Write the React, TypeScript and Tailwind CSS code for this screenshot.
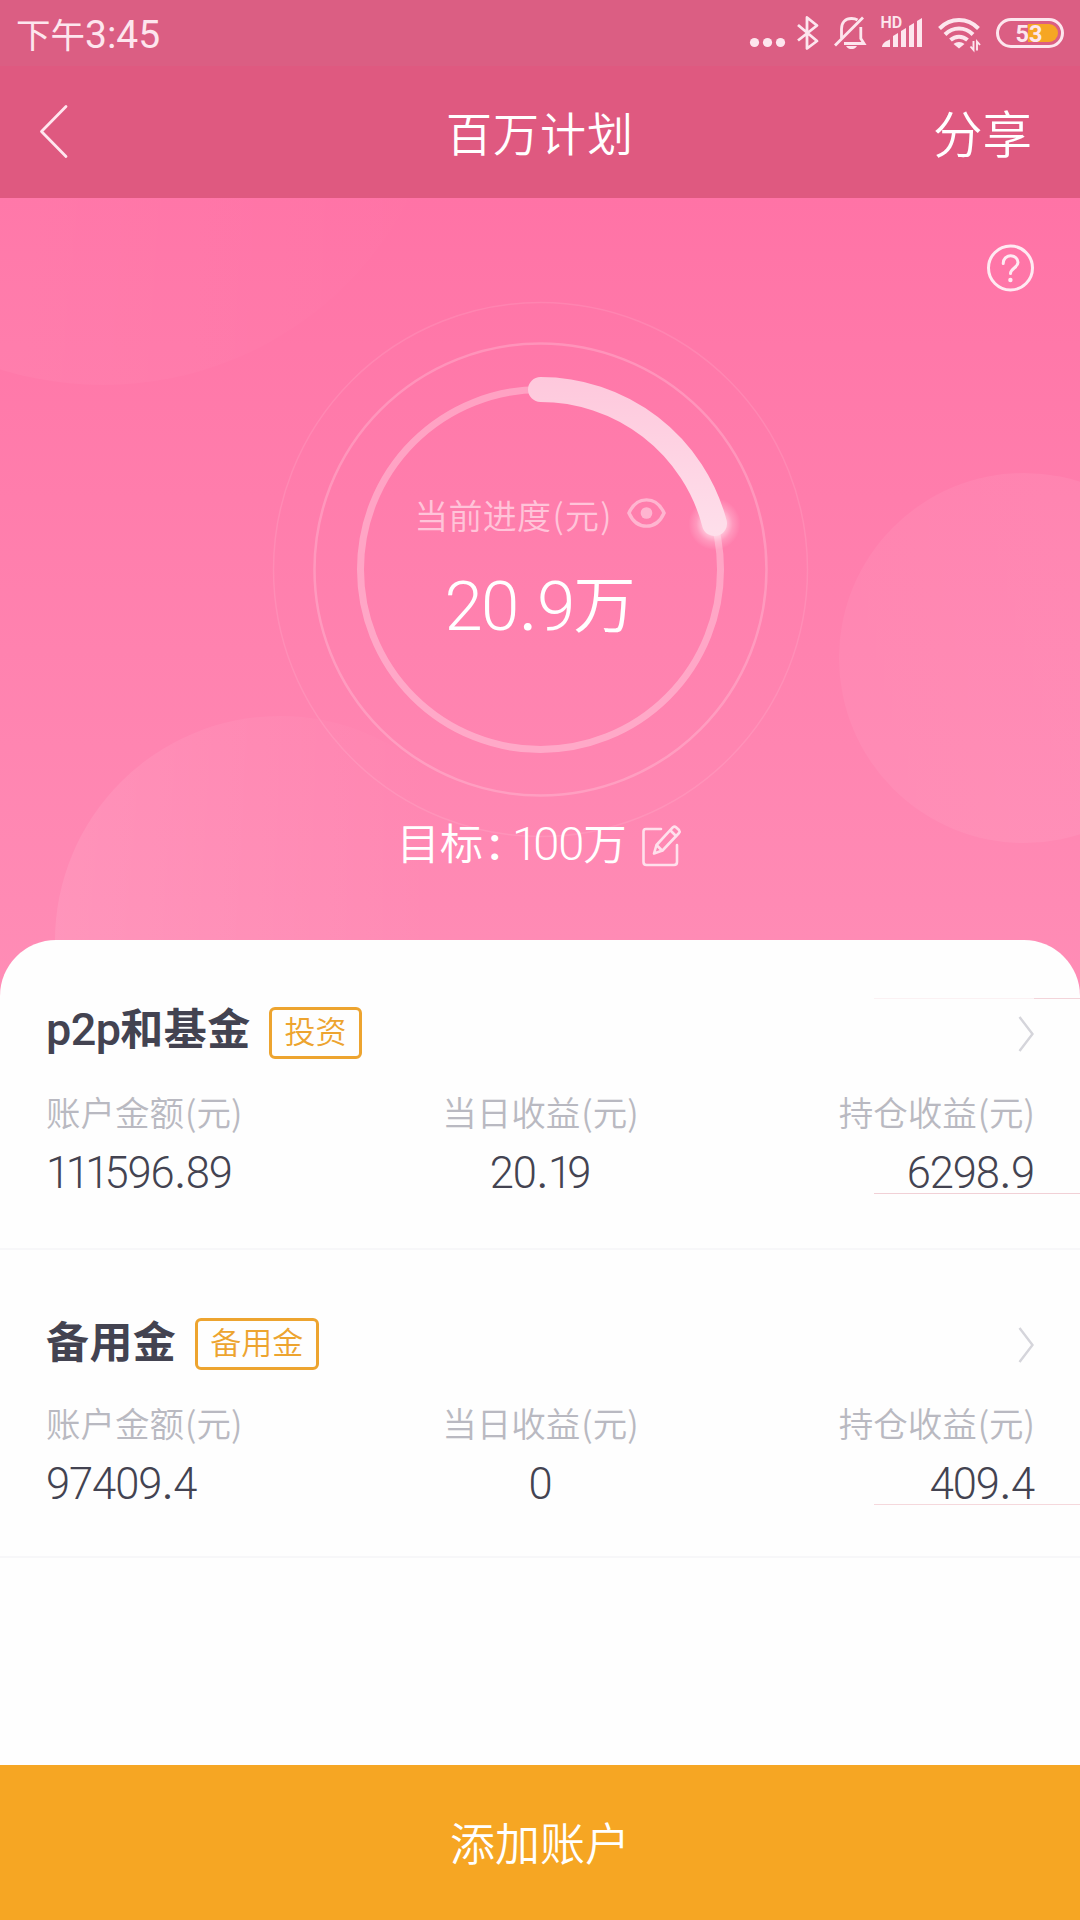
import React from "react";

const FONT = "font-['Noto_Sans_CJK_SC',sans-serif]";

function Digits({ value }: { value: string }) {
  return (
    <span className="font-['Roboto',sans-serif] tracking-[-0.025em]">
      {value.split("").map((c, i) =>
        c === "1" ? (
          <span key={i} className={i === 0 ? "-mr-[0.075em]" : "-mr-[0.085em]"}>
            {c}
          </span>
        ) : c === "." ? (
          <span key={i} className="mx-[0.02em] font-normal">
            {c}
          </span>
        ) : (
          <span key={i}>{c}</span>
        ),
      )}
    </span>
  );
}

function StatusIcons() {
  return (
    <div className="flex items-start text-[#fde6ee]">
      <svg className="ml-[4px] h-[66px] w-[40px]" viewBox="748 0 40 66" fill="currentColor">
        <circle cx="754.5" cy="42.5" r="4.6" />
        <circle cx="767.5" cy="42.5" r="4.6" />
        <circle cx="780.5" cy="42.5" r="4.6" />
      </svg>
      <svg className="ml-[4px] h-[66px] w-[36px]" viewBox="792 0 36 66" fill="none" stroke="currentColor" strokeWidth="2.8" strokeLinejoin="round">
        <path d="M798 25L817 41L807 48.5V17.5L817 25.5L798 40.500" />
      </svg>
      <svg className="ml-[4px] h-[66px] w-[38px]" viewBox="832 0 38 66" fill="none" stroke="currentColor" strokeWidth="2.8">
        <path d="M841.5 38V29C841.500 22 845.500 18.500 851.500 18.500C854 18.500 856 19 857.500 20" />
        <path d="M844 43.500H864L860.800 38.500V27" />
        <path d="M835 45.500L863 17.500" />
        <path d="M846 46H857C855.500 48.500 853.500 49 851.500 49S847.500 48.500 846 46Z" fill="currentColor" stroke="none" />
      </svg>
      <svg className="ml-[10px] h-[66px] w-[44px]" viewBox="880 0 44 66" fill="currentColor">
        <text x="880.5" y="28" fontFamily="Roboto" fontWeight="600" fontSize="16">HD</text>
        <path d="M882 47C882 44 885 41 890 39.500V47Z" />
        <path d="M893 36L898 33V47H893Z" />
        <path d="M901 31L906 28V47H901Z" />
        <path d="M909 26L914 23V47H909Z" />
        <path d="M917 21L922 18V47H917Z" />
      </svg>
      <svg className="ml-[14px] h-[66px] w-[44px]" viewBox="938 0 44 66" fill="none" stroke="currentColor" strokeWidth="4">
        <path d="M939.500 28.500C950.500 17.200 967.500 17.200 978.500 28.500" />
        <path d="M945 34.500C953 26.500 965 26.500 973 34.500" />
        <path d="M950.500 40C955.500 35.500 962.500 35.500 967.500 40" />
        <path d="M953.500 44C956.500 41.200 961.500 41.200 964.500 44L959 48.500Z" fill="currentColor" stroke="none" />
        <path d="M973.500 41V50L970.500 46.500M977 50.500V41.500L980 45" strokeWidth="1.900" />
      </svg>
      <svg className="ml-[13px] h-[66px] w-[85px]" viewBox="995 0 85 66" fill="none">
        <rect x="997.500" y="19.500" width="65" height="27" rx="13.500" stroke="currentColor" strokeWidth="3" />
        <path d="M1028 24H1049A9 9 0 0 1 1049 42H1028Z" fill="#f6a623" />
        <text x="1029" y="41.500" textAnchor="middle" fill="currentColor" fontFamily="Roboto" fontWeight="700" fontSize="23.5">53</text>
      </svg>
    </div>
  );
}

function Ring() {
  return (
    <svg className="absolute left-0 top-0 h-[796px] w-[1080px]" viewBox="0 198 1080 796" fill="none">
      <defs>
        <linearGradient id="c1" x1="0" y1="0" x2="1" y2="0">
          <stop offset="0" stopColor="#fff" stopOpacity="0.06" />
          <stop offset="1" stopColor="#fff" stopOpacity="0" />
        </linearGradient>
        <linearGradient id="c2" x1="0" y1="0" x2="1" y2="0">
          <stop offset="0" stopColor="#fff" stopOpacity="0.09" />
          <stop offset="0.85" stopColor="#fff" stopOpacity="0" />
        </linearGradient>
        <linearGradient id="c3" x1="0" y1="0" x2="1" y2="0">
          <stop offset="0" stopColor="#fff" stopOpacity="0.05" />
          <stop offset="1" stopColor="#fff" stopOpacity="0.07" />
        </linearGradient>
        <linearGradient id="arc" gradientUnits="userSpaceOnUse" x1="0" y1="377" x2="0" y2="536">
          <stop offset="0" stopColor="#fec8dc" />
          <stop offset="1" stopColor="#fedfeb" />
        </linearGradient>
        <radialGradient id="glow">
          <stop offset="0.4" stopColor="#fff" stopOpacity="0.6" />
          <stop offset="0.7" stopColor="#fff" stopOpacity="0.2" />
          <stop offset="1" stopColor="#fff" stopOpacity="0" />
        </radialGradient>
      </defs>
      <circle cx="103" cy="40" r="345" fill="url(#c1)" />
      <circle cx="1024" cy="658" r="185" fill="url(#c3)" />
      <circle cx="280" cy="941" r="225" fill="url(#c2)" />
      <circle cx="540.500" cy="569.500" r="267" stroke="#fff" strokeOpacity="0.1" strokeWidth="1.500" />
      <circle cx="540.500" cy="569.500" r="226" stroke="#fff" strokeOpacity="0.2" strokeWidth="2.500" />
      <circle cx="540.500" cy="569.500" r="180" stroke="#fff" strokeOpacity="0.3" strokeWidth="7" />
      <circle cx="714.500" cy="524" r="26" fill="url(#glow)" />
      <path d="M540.500 389.500A180 180 0 0 1 714.500 523.500" stroke="url(#arc)" strokeWidth="25" strokeLinecap="round" />
    </svg>
  );
}

function Hero() {
  return (
    <section className="relative h-[802px] bg-linear-to-b from-[#ff73a6] to-[#ff8db6]">
      <Ring />
      <div className="relative flex flex-col items-center">
        <div className="flex h-[140px] w-full justify-end pr-[46px] pt-[46px]">
          <svg className="h-[48px] w-[48px]" viewBox="0 0 48 48" fill="none" stroke="#ffeaf2" strokeWidth="3" strokeLinecap="round">
            <circle cx="24.500" cy="24" r="22" />
            <path d="M17.200 19.500C17.200 14.800 20.500 11.800 24.600 11.800C29 11.800 32 14.800 32 18.500C32 23.500 24.500 24.500 24.500 29.500" />
            <circle cx="24.400" cy="36" r="2.200" fill="#ffeaf2" stroke="none" />
          </svg>
        </div>
        <div className="mt-[149px] flex h-[56px] items-center">
          <span className="whitespace-nowrap text-[34px] font-[350] leading-[56px] tracking-[0.300px] text-[#ffc4d9]">
            当前进度<span className="mx-[1px]">(</span>元<span className="ml-[1px]">)</span>
          </span>
          <svg className="mb-[4px] ml-[15px] h-[32px] w-[39px]" viewBox="0 0 40 32" fill="none" stroke="#ffb5d0" strokeWidth="3.500">
            <path d="M2 16C6 7 12 2.500 20 2.500S34 7 38 16C34 25 28 29.500 20 29.500S6 25 2 16Z" />
            <circle cx="20" cy="16" r="6" fill="#ffb5d0" stroke="none" />
          </svg>
        </div>
        <div className="mt-[22px] flex h-[84px] items-baseline whitespace-nowrap text-[69px] font-light leading-[84px] text-white">
          <Digits value="20.9" />
          <span className="text-[62px] font-[350] leading-none"><span className="relative -top-[2px]">万</span></span>
        </div>
        <div className="mt-[163px] flex h-[60px] items-center">
          <span className="whitespace-nowrap text-[43.500px] font-[350] leading-[60px] text-white">
            目标<span className="mx-[5px] font-['Roboto'] text-[46px] font-semibold">:</span><span className="ml-[6px] text-[47px] font-light"><Digits value="100" /></span>万
          </span>
          <svg className="ml-[15px] mt-[6px] h-[44px] w-[42px]" viewBox="643 823 42 44" fill="none" stroke="#ffe0ec" strokeWidth="2.600" strokeLinecap="round" strokeLinejoin="round">
            <path d="M662 829H647Q644.500 829 644.500 831.500V862Q644.500 865 647.500 865H675Q678 865 678 862V845" />
            <path d="M655 853.500L657.500 845L674 827.200Q675.500 826 677 827.200L680 830Q681.200 831.500 680 833L663.500 850.500Z" />
            <path d="M671.500 830.500L677 836M658 845.500L663 850.500" />
          </svg>
        </div>
      </div>
    </section>
  );
}

type Account = { name: [string, string]; tag: string; values: [string, string, string] };

const accounts: Account[] = [
  { name: ["p2p", "和基金"], tag: "投资", values: ["111596.89", "20.19", "6298.9"] },
  { name: ["", "备用金"], tag: "备用金", values: ["97409.4", "0", "409.4"] },
];

const labels = ["账户金额", "当日收益", "持仓收益"];
const aligns = ["text-left", "text-center", "text-right"];

function AccountRow({ account, first }: { account: Account; first: boolean }) {
  return (
    <div className={first ? "relative h-[310px] border-b-2 border-[#f7f7f9] pt-[59px]" : "relative h-[308px] border-b-2 border-[#f7f7f9] pt-[60px]"}>
      {first && (
        <div className="absolute right-0 top-[58px] flex h-px">
          <div className="w-[160px] bg-[#fbf1f3]" />
          <div className="w-[46px] bg-[#f3d4da]" />
        </div>
      )}
      <div className={first ? "absolute right-0 top-[253px] h-px w-[206px] bg-[#f1d0d6]" : "absolute right-0 top-[254px] h-px w-[206px] bg-[#f5d8dc]"} />
      <div className="flex h-[64px] items-center pl-[46px] pr-[46px]">
        <span className="-mt-[7px] whitespace-nowrap text-[43px] font-bold leading-[60px] tracking-[0.400px] text-[#434351]">
          {account.name[0] && <span className="font-['Roboto'] text-[45px] font-medium tracking-[-0.600px]">{account.name[0]}</span>}
          {account.name[1]}
        </span>
        <span className="ml-[18.500px] mt-[3px] flex h-[52px] items-center rounded-[6px] border-[3px] border-[#eda42f] px-[12.500px] pb-[6px] text-[31px] font-[350] leading-[44px] text-[#eda42f]">
          {account.tag}
        </span>
        <svg className="ml-auto mt-[5px] h-[36px] w-[16px]" viewBox="0 0 16 36" fill="none" stroke="#d5d5db" strokeWidth="2.400">
          <path d="M1.500 1L14.500 18L1.500 35" />
        </svg>
      </div>
      <div className="mt-[23px] grid grid-cols-3 px-[46px]">
        {labels.map((label, i) => (
          <div key={label} className={aligns[i]}>
            <div className="h-[50px] whitespace-nowrap text-[34.500px] font-[350] leading-[50px] text-[#b9b9c1]">
              {label}
              <span className="ml-[1px]">(</span>元<span className="-mr-px">)</span>
            </div>
            <div className="mt-[6px] h-[56px] whitespace-nowrap text-[43.500px] font-light leading-[56px] text-[#434351]">
              <Digits value={account.values[i]} />
            </div>
          </div>
        ))}
      </div>
    </div>
  );
}

export default function App() {
  return (
    <div className={`${FONT} flex h-[1920px] w-[1080px] flex-col overflow-hidden bg-[#fefefe]`}>
      <header>
        <div className="flex h-[66px] items-start justify-between bg-[#db5e83]">
          <div className="flex h-[66px] items-baseline whitespace-nowrap pl-[16px] text-[34.500px] leading-[66px] text-[#fde6ee]">
            下午<span className="font-['Roboto'] text-[39px]">3:45</span>
          </div>
          <StatusIcons />
        </div>
        <div className="grid h-[132px] grid-cols-3 items-center bg-[#df5980] text-white">
          <svg className="ml-[38px] h-[56px] w-[32px]" viewBox="38 104 32 56" fill="none" stroke="#ffe6ef" strokeWidth="2.800" strokeLinecap="round" strokeLinejoin="round">
            <path d="M66 106.500L41.500 131.500L66 156.500" />
          </svg>
          <h1 className="-mt-[2px] text-center text-[46px] font-[350] leading-[66px] tracking-[1px]">百万计划</h1>
          <span className="-mt-px pr-[48px] text-right text-[49.500px] font-[350] leading-[66px]">分享</span>
        </div>
      </header>
      <Hero />
      <main className="relative -mt-[60px] flex-1 rounded-t-[56px] bg-[#fefefe]">
        {accounts.map((a, i) => (
          <AccountRow key={a.tag} account={a} first={i === 0} />
        ))}
      </main>
      <button className="h-[155px] w-full bg-[#f6a623] pb-[2px] text-[45px] font-[350] leading-[66px] text-white">添加账户</button>
    </div>
  );
}
